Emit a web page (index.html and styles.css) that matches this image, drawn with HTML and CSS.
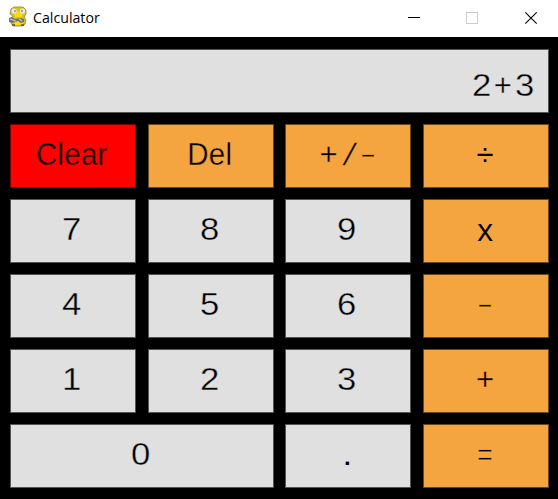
FILE: index.html
```html
<!DOCTYPE html>
<html lang="en">
<head>
<meta charset="utf-8">
<title>Calculator</title>
<link rel="stylesheet" href="styles.css">
</head>
<body>
<header class="titlebar">
  <svg class="logo" width="20" height="22" viewBox="0 0 20 22">
    <path d="M3 3L6 1H15L18 4V8L16 11L18 14L17 18L15 20H5L3 17V12L5 10L2 8Z" fill="#d9c51c" stroke="#8a8440" stroke-width=".8"/>
    <path d="M6 7L10 5L15 8L13 11H7Z M6 15H15V19H7Z" fill="#f5dd19"/>
    <circle cx="6" cy="5" r="2.6" fill="#e8e9df"/><circle cx="14.5" cy="5" r="2.6" fill="#e8e9df"/>
    <circle cx="7" cy="5" r=".8" fill="#555"/><circle cx="14" cy="5" r=".8" fill="#555"/>
    <path d="M1 12L4 11L7 13L13 12L16 13V16L13 17L10 15L4 17L1 16Z" fill="#77716f"/>
    <path d="M2 13L5 14L8 15M11 13L14 15" stroke="#c9c5c4" stroke-width="1.3" fill="none"/>
    <path d="M4 19H7M13 19H16" stroke="#595022" stroke-width="1.5"/>
  </svg>
  <h1 class="caption">Calculator</h1>
  <svg class="controls" width="132" height="14" viewBox="0 0 132 14" shape-rendering="crispEdges">
    <path d="M1 6.5H13" stroke="#000"/>
    <path d="M59.5 1.5H70.5V12.500H59.5Z" fill="none" stroke="#ccc"/>
    <path d="M118.300 1.300L129.700 12.700M129.700 1.300L118.300 12.700" stroke="#000" stroke-width="1.100" shape-rendering="auto"/>
  </svg>
</header>
<main class="calculator">
  <output class="display"><span class="digit">2</span><span class="plus">+</span><span class="digit">3</span></output>
  <button class="key clear"><span class="word">Clear</span></button>
  <button class="key action"><span class="word">Del</span></button>
  <button class="key action sign"><span class="plus">+</span><span class="slash">/</span><span class="dash">-</span></button>
  <button class="key action"><span class="divide">÷</span></button>
  <button class="key"><span class="digit">7</span></button>
  <button class="key"><span class="digit">8</span></button>
  <button class="key"><span class="digit">9</span></button>
  <button class="key action"><span class="times">x</span></button>
  <button class="key"><span class="digit">4</span></button>
  <button class="key"><span class="digit">5</span></button>
  <button class="key"><span class="digit">6</span></button>
  <button class="key action"><span class="dash">-</span></button>
  <button class="key"><span class="digit">1</span></button>
  <button class="key"><span class="digit">2</span></button>
  <button class="key"><span class="digit">3</span></button>
  <button class="key action"><span class="plus">+</span></button>
  <button class="key zero"><span class="digit">0</span></button>
  <button class="key"><span class="digit point">.</span></button>
  <button class="key action"><span class="equals">=</span></button>
</main>
</body>
</html>
```
FILE: styles.css
```css
* { box-sizing: border-box; }
body { margin: 0; background: #000; }
.titlebar {
  display: flex;
  align-items: center;
  height: 37px;
  padding: 0 19px 0 8px;
  background: #fff;
}
.logo { margin-top: -3px; }
.caption {
  flex: 1;
  margin: 0 0 2px 5px;
  font: 400 14.2px/20px "Open Sans", "Noto Sans", sans-serif;
  color: #000;
}
.controls { margin-top: -2px; }
.calculator {
  display: grid;
  grid-template-columns: 126px 125px 126px 126px;
  grid-auto-rows: 64px;
  gap: 11px 12px;
  padding: 12px 9px 0 10px;
  font: 31px/36px "Liberation Sans", Arial, sans-serif;
  color: #000;
}
.display {
  --surface: #e0e0e0;
  grid-column: 1 / -1;
  display: flex;
  justify-content: flex-end;
  gap: 4px;
  padding: 18px 15px 0 0;
  background: var(--surface);
  border: 1px solid #555;
}
.key {
  --surface: #e0e0e0;
  display: flex;
  justify-content: center;
  align-items: flex-start;
  width: 126px;
  padding: 12px 2px 0 0;
  font: inherit;
  color: inherit;
  background: var(--surface);
  border: 1px solid #555;
  border-radius: 0;
}
.action { --surface: #f4a53f; border-color: #6b481b; }
.clear { --surface: #f00; border-color: #700; }
.zero { grid-column: span 2; width: 264px; }
.sign { gap: 5px; }

/* A thin outline in the surface colour lightens the strokes. */
.digit, .word, .plus, .slash, .dash, .equals {
  display: block;
  -webkit-text-stroke: .35px var(--surface);
}
.digit { transform: scaleX(1.12); }
.point { -webkit-text-stroke: 0; }
.word { letter-spacing: .3px; transform: scaleX(.95); }
.plus { width: 18px; }
.slash { width: 13px; text-align: center; transform: skewX(-15deg); }
.dash { width: 14px; text-align: center; transform: translateY(-1px) scaleX(1.7); -webkit-text-stroke-width: .8px; }
.equals { transform: scaleX(.88); -webkit-text-stroke-width: .8px; }
.times { margin-top: -1px; font-family: "Open Sans", sans-serif; }
```
